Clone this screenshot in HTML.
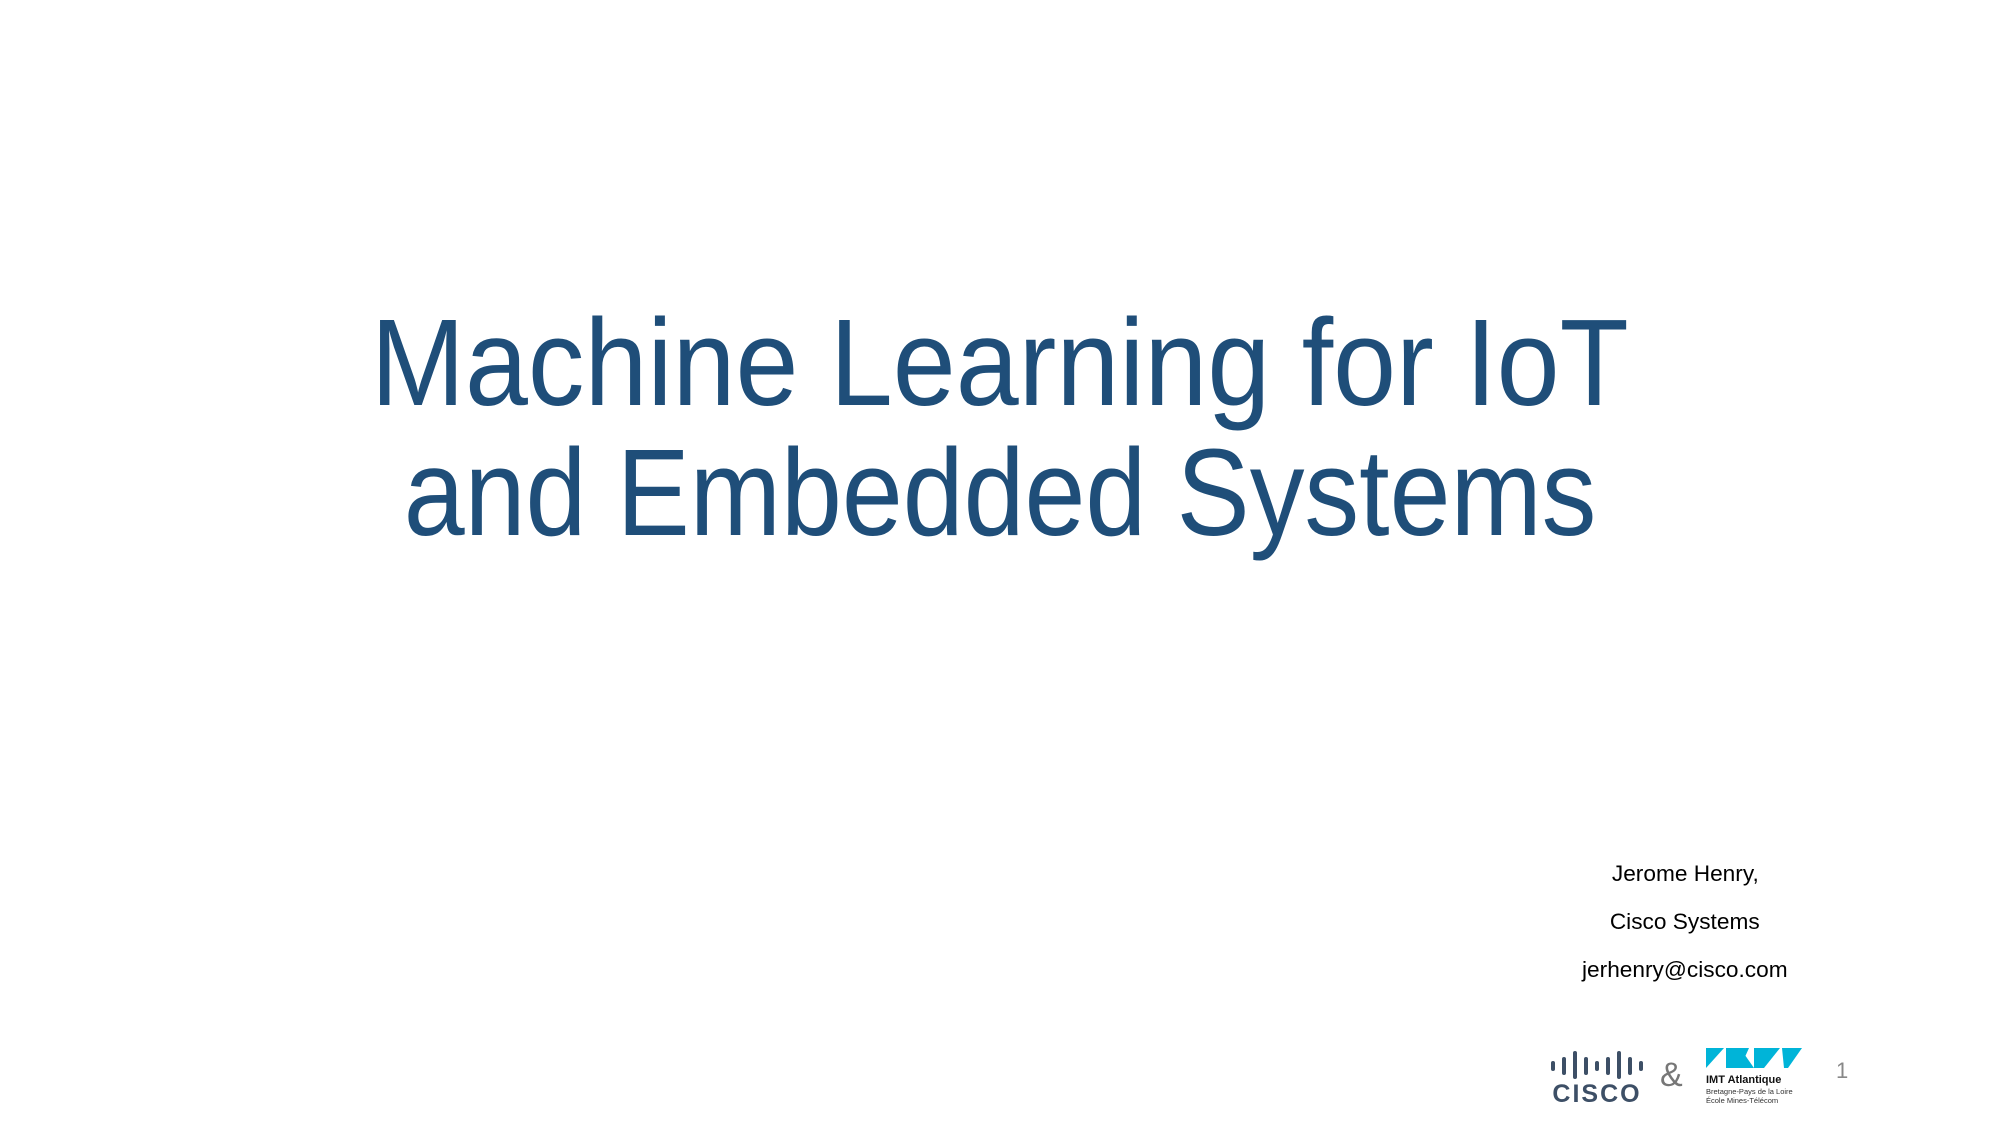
<!DOCTYPE html>
<html><head><meta charset="utf-8"><style>
html,body{margin:0;padding:0;background:#fff;}
body{width:2000px;height:1125px;position:relative;overflow:hidden;font-family:"Liberation Sans",sans-serif;}
.t{position:absolute;left:0;width:2000px;text-align:center;color:#1F4E79;font-size:123px;line-height:1;white-space:nowrap;}
.t span{display:inline-block;transform:scaleX(0.92);transform-origin:center;}
.a{position:absolute;left:1485px;width:400px;text-align:center;font-size:22px;color:#000;}
.a span{display:inline-block;transform:scaleX(1.03);}
</style></head><body>
<div class="t" style="top:302px"><span>Machine Learning for IoT</span></div>
<div class="t" style="top:432px"><span style="transform:scaleX(0.89)">and Embedded Systems</span></div>
<div class="a" style="top:861px"><span>Jerome Henry,</span></div>
<div class="a" style="top:909px"><span>Cisco Systems</span></div>
<div class="a" style="top:957px"><span>jerhenry@cisco.com</span></div>
<svg style="position:absolute;left:1549px;top:1050px" width="100" height="56">
<g stroke="#3d4f66" stroke-width="4" stroke-linecap="round">
<line x1="4" y1="13" x2="4" y2="19"/><line x1="15" y1="9" x2="15" y2="23"/><line x1="26" y1="3" x2="26" y2="27"/>
<line x1="37" y1="9" x2="37" y2="23"/><line x1="48" y1="13" x2="48" y2="19"/><line x1="59" y1="9" x2="59" y2="23"/>
<line x1="70" y1="3" x2="70" y2="27"/><line x1="81" y1="9" x2="81" y2="23"/><line x1="92" y1="13" x2="92" y2="19"/>
</g>
<text x="48" y="52" text-anchor="middle" font-family="Liberation Sans" font-weight="bold" font-size="25" fill="#3d4f66" letter-spacing="2">CISCO</text>
</svg>
<div style="position:absolute;left:1660px;top:1056px;font-size:34px;color:#777">&amp;</div>
<svg style="position:absolute;left:1704px;top:1046px" width="110" height="62">
<polygon points="2,2 20,2 2,22" fill="#00b4d8"/>
<polygon points="22,2 45,2 36,22 22,22" fill="#00b4d8"/>
<polygon points="22,22 36,2 50,22" fill="#00b4d8"/>
<polygon points="50,2 76,2 60,22 50,22" fill="#00b4d8"/>
<polygon points="78,2 98,2 84,22 80,22" fill="#00b4d8"/>
<text x="2" y="37" font-family="Liberation Sans" font-weight="bold" font-size="11" fill="#111">IMT Atlantique</text>
<text x="2" y="48" font-family="Liberation Sans" font-size="7.5" fill="#333">Bretagne-Pays de la Loire</text>
<text x="2" y="57" font-family="Liberation Sans" font-size="7.5" fill="#333">École Mines-Télécom</text>
</svg>
<div style="position:absolute;left:1836px;top:1058px;font-size:22px;color:#888">1</div>
</body></html>
